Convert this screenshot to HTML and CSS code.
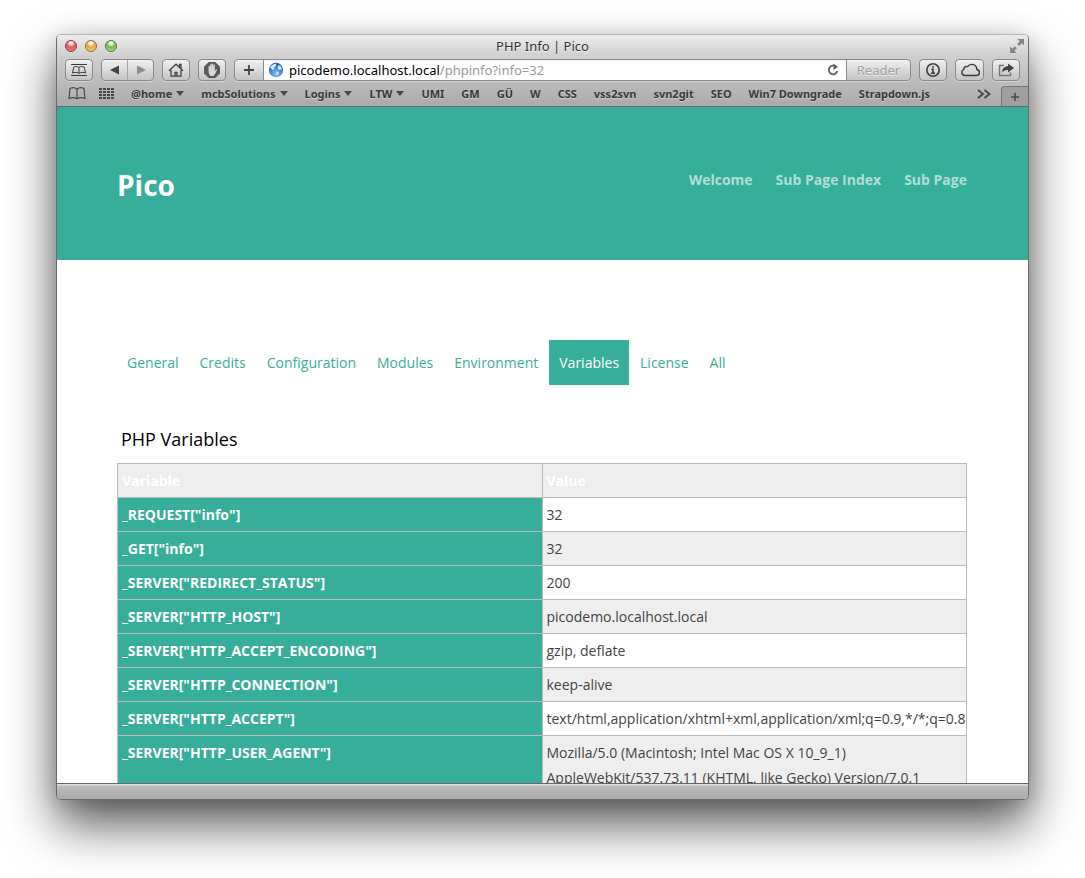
FILE: index.html
```html
<!DOCTYPE html>
<html lang="en">
<head>
<meta charset="utf-8">
<title>PHP Info | Pico</title>
<link rel="stylesheet" href="styles.css">
</head>
<body>
<div class="window">
  <header class="chrome">
    <div class="titlebar">
      <div class="lights">
        <button class="light red" aria-label="Close"></button>
        <button class="light amber" aria-label="Minimize"></button>
        <button class="light green" aria-label="Zoom"></button>
      </div>
      <div class="title">PHP Info | Pico</div>
      <button class="fullscreen" aria-label="Full screen">
        <svg width="16" height="16" viewBox="0 0 16 16"><path d="M8.500 1H15v6.500l-2.200-2.200-2.600 2.600-2-2 2.600-2.600zM1 8.500v6.500h6.500l-2.200-2.200 2.600-2.600-2-2-2.600 2.600z" fill="#858585"/></svg>
      </button>
    </div>
    <div class="toolbar">
      <button class="tool" aria-label="Top sites">
        <svg width="18" height="14" viewBox="0 0 18 14" fill="none" stroke="#3c3c3c"><path d="M1 1.500h16M1 12.500h16"/><path d="M9 4.500C7.500 3.200 5 3.200 3.700 4.200L2.500 10c1.800-.8 4.800-.8 6.500.3 1.700-1.100 4.700-1.100 6.500-.3l-1.200-5.800C13 3.200 10.500 3.200 9 4.500zv6"/></svg>
      </button>
      <div class="pair">
        <button class="half" aria-label="Back"><svg width="10" height="10" viewBox="0 0 10 10"><path d="M9 .5v9L0 5z" fill="#444"/></svg></button>
        <button class="half" aria-label="Forward"><svg width="10" height="10" viewBox="0 0 10 10"><path d="M1 .5v9L10 5z" fill="#8b8b8b"/></svg></button>
      </div>
      <button class="tool" aria-label="Home">
        <svg width="16" height="14" viewBox="0 0 16 14" fill="none" stroke="#444" stroke-width="1.300"><path d="M1 7.800L8 1.200l7 6.600M11.500 4V1.500h1.500v4M3 7v6.200h10V7"/><path d="M7 13V9.500h2V13"/></svg>
      </button>
      <button class="tool" aria-label="Ad blocker">
        <svg width="18" height="18" viewBox="0 0 18 18"><path d="M5.700 1h6.600L17 5.700v6.600L12.300 17H5.700L1 12.300V5.700z" fill="#5b5b5b"/><path d="M5.500 9.500V5.300q.8-.8 1.400 0V8l.2-4.500q.8-.8 1.400 0V8l.3-5q.8-.8 1.400 0v5l.3-4q.8-.8 1.400 0v6l1-1.500q1-.6 1.200.3L12 13.200 10.500 15h-3L6 13z" fill="#d8d8d8"/></svg>
      </button>
      <div class="address">
        <button class="add" aria-label="Add bookmark"><svg width="12" height="12" viewBox="0 0 12 12"><path d="M6 1v10M1 6h10" stroke="#444" stroke-width="1.800"/></svg></button>
        <div class="field">
          <svg width="16" height="16" viewBox="0 0 16 16"><defs><radialGradient id="globe" cx=".5" cy=".75" r=".7"><stop offset="0" stop-color="#7cc4f6"/><stop offset="1" stop-color="#1c58b6"/></radialGradient></defs><circle cx="8" cy="8" r="7.200" fill="url(#globe)"/><path d="M2 5Q4 2 8 1.500L8 4 6 5.500 6.500 7 4.500 8zM10.500 3l2.500 1.500.8 3-2.300.5L9.500 6zM8.500 9.500l2.500 1-1.500 3L8 12.500z" fill="#cfe7fb"/></svg>
          <a class="url" href="#"><span class="host">picodemo.localhost.local</span><span>/phpinfo?info=32</span></a>
          <svg class="reload" width="12" height="14" viewBox="0 0 12 14"><path d="M9 3.800A4.300 4.300 0 1 0 10.300 8" fill="none" stroke="#5d5d5d" stroke-width="1.800"/><path d="M6.500.5L10.800 4 6.500 7z" fill="#5d5d5d"/></svg>
        </div>
        <button class="reader">Reader</button>
      </div>
      <button class="tool" aria-label="Information">
        <svg width="16" height="16" viewBox="0 0 16 16" fill="none" stroke="#3d3d3d" stroke-width="1.600"><circle cx="8" cy="8" r="6.200"/><path d="M8 4v1.700M6.300 7.300H8v4M6 11.300h4"/></svg>
      </button>
      <button class="tool wide" aria-label="iCloud tabs">
        <svg width="20" height="14" viewBox="0 0 20 14" fill="none" stroke="#3d3d3d" stroke-width="1.400"><path d="M5 12.500h11a3 3 0 0 0 .8-6 5 5 0 0 0-9.200-2.800A2.500 2.500 0 0 0 4 6.300a3.200 3.200 0 0 0 1 6.200z"/></svg>
      </button>
      <button class="tool" aria-label="Share">
        <svg width="18" height="14" viewBox="0 0 18 14"><path d="M7 2.500H2.500v10h11V9.500" fill="none" stroke="#777" stroke-width="1.500"/><path d="M11 .5L17 5l-6 4.500V7Q7 6.500 5 10q0-6.500 6-7z" fill="#444"/></svg>
      </button>
    </div>
    <nav class="bookmarks" aria-label="Bookmarks">
      <button class="plain" aria-label="Show bookmarks"><svg width="18" height="13" viewBox="0 0 18 13" fill="none" stroke="#4a4a4a" stroke-width="1.200"><path d="M9 2.200C7 .5 4 .5 2 1.500L1 11.500c2.500-1 6-1 8 .3 2-1.300 5.500-1.300 8-.3l-1-10C14 .5 11 .5 9 2.200zv9.500"/></svg></button>
      <button class="plain grid" aria-label="Top sites grid"><svg width="15" height="11" viewBox="0 0 15 11"><path d="M0 1h15M0 4h15M0 7h15M0 10h15" stroke="#474747" stroke-width="2" stroke-dasharray="3 1"/></svg></button>
      <div class="links">
        <a class="menu" href="#">@home</a>
        <a class="menu" href="#">mcbSolutions</a>
        <a class="menu" href="#">Logins</a>
        <a class="menu" href="#">LTW</a>
        <a href="#">UMI</a>
        <a href="#">GM</a>
        <a href="#">GÜ</a>
        <a href="#">W</a>
        <a href="#">CSS</a>
        <a href="#">vss2svn</a>
        <a href="#">svn2git</a>
        <a href="#">SEO</a>
        <a href="#">Win7 Downgrade</a>
        <a href="#">Strapdown.js</a>
      </div>
      <button class="plain more" aria-label="More bookmarks"><svg width="14" height="10" viewBox="0 0 14 10" fill="none" stroke="#4a4a4a" stroke-width="2"><path d="M1 1l5 4-5 4M7.500 1l5 4-5 4"/></svg></button>
      <button class="newtab" aria-label="New tab"><svg width="10" height="10" viewBox="0 0 10 10"><path d="M5 1v8M1 5h8" stroke="#4a4a4a" stroke-width="1.600"/></svg></button>
    </nav>
  </header>
  <main class="page">
    <div class="banner">
      <div class="inner">
        <h1>Pico</h1>
        <nav class="sitenav">
          <a href="#">Welcome</a>
          <a href="#">Sub Page Index</a>
          <a href="#">Sub Page</a>
        </nav>
      </div>
    </div>
    <div class="content">
      <nav class="tabs">
        <a href="#">General</a>
        <a href="#">Credits</a>
        <a href="#">Configuration</a>
        <a href="#">Modules</a>
        <a href="#">Environment</a>
        <a class="active" href="#">Variables</a>
        <a href="#">License</a>
        <a href="#">All</a>
      </nav>
      <h2>PHP Variables</h2>
      <table>
        <thead><tr><th>Variable</th><th>Value</th></tr></thead>
        <tbody>
          <tr><th>_REQUEST["info"]</th><td>32</td></tr>
          <tr><th>_GET["info"]</th><td>32</td></tr>
          <tr><th>_SERVER["REDIRECT_STATUS"]</th><td>200</td></tr>
          <tr><th>_SERVER["HTTP_HOST"]</th><td>picodemo.localhost.local</td></tr>
          <tr><th>_SERVER["HTTP_ACCEPT_ENCODING"]</th><td>gzip, deflate</td></tr>
          <tr><th>_SERVER["HTTP_CONNECTION"]</th><td>keep-alive</td></tr>
          <tr><th>_SERVER["HTTP_ACCEPT"]</th><td>text/html,application/xhtml+xml,application/xml;q=0.9,*/*;q=0.8</td></tr>
          <tr><th>_SERVER["HTTP_USER_AGENT"]</th><td>Mozilla/5.0 (Macintosh; Intel Mac OS X 10_9_1) AppleWebKit/537.73.11 (KHTML, like Gecko) Version/7.0.1</td></tr>
        </tbody>
      </table>
    </div>
  </main>
  <footer class="status"></footer>
</div>
</body>
</html>
```

FILE: styles.css
```css
* { box-sizing: border-box; }
body {
  margin: 0;
  height: 100vh;
  padding: 34px 56px 78px;
  background: #fff;
  font-family: "Open Sans", sans-serif;
  font-size: 14px;
  overflow: hidden;
}
a { text-decoration: none; color: inherit; }
button { padding: 0; border: 0; background: none; font: inherit; }
svg { display: block; flex: none; }

.window {
  height: 100%;
  display: flex;
  flex-direction: column;
  border: 1px solid #6c6c6c;
  border-top-color: #b4b4b4;
  border-radius: 5px;
  overflow: hidden;
  background: #fff;
  box-shadow: 0 25px 50px rgba(0, 0, 0, .65), 0 4px 20px rgba(0, 0, 0, .15);
}

.chrome {
  flex: none;
  background: linear-gradient(#ececec, #cfcfcf 30%, #aaa);
  border-bottom: 1px solid #666;
  font-family: "Noto Sans", sans-serif;
}
.titlebar {
  display: grid;
  grid-template-columns: 1fr auto 1fr;
  align-items: center;
  height: 23px;
  padding: 0 3px 1px 8px;
}
.lights { display: flex; gap: 8px; }
.light {
  width: 12px;
  height: 12px;
  border-radius: 50%;
  border: 1px solid #666;
}
.red { background: radial-gradient(circle at 50% 20%, #fff 0 10%, #e8525a 45%, #f48b8b); border-color: #93383c; }
.amber { background: radial-gradient(circle at 50% 20%, #fff 0 10%, #eda53b 45%, #fbdc86); border-color: #96672a; }
.green { background: radial-gradient(circle at 50% 20%, #fff 0 10%, #76b84d 45%, #bce998); border-color: #4b7b35; }
.title { padding-right: 5px; font-size: 13px; line-height: 20px; color: #333; text-shadow: 0 1px #f5f5f5; }
.fullscreen { justify-self: end; }

.toolbar { display: flex; gap: 8px; padding: 1px 8px 3px; }
.tool, .pair, .address {
  height: 22px;
  border: 1px solid #8a8a8a;
  border-radius: 4px;
  background: linear-gradient(#f1f1f1, #c3c3c3);
  box-shadow: 0 1px rgba(255, 255, 255, .35);
}
.tool { display: flex; flex: none; align-items: center; justify-content: center; width: 28px; }
.wide { width: 29px; }
.pair { display: flex; flex: none; width: 53px; }
.half { flex: 1; display: flex; align-items: center; justify-content: center; }
.half + .half { border-left: 1px solid #a5a5a5; }
.address { display: flex; flex: 1; overflow: hidden; }
.add { display: flex; flex: none; align-items: center; justify-content: center; width: 29px; border-right: 1px solid #8a8a8a; }
.field {
  flex: 1;
  display: flex;
  align-items: center;
  gap: 5px;
  padding: 0 7px 0 4px;
  background: linear-gradient(#f5f5f5, #fff 5px);
}
.url { flex: 1; font-size: 13px; line-height: 20px; color: #9a9a9a; }
.host { color: #000; }
.reader {
  width: 64px;
  border-left: 1px solid #8a8a8a;
  font-size: 13px;
  line-height: 20px;
  color: #a2a2a2;
  text-shadow: 0 1px #eee;
}

.bookmarks { display: flex; align-items: center; height: 22px; padding-left: 11px; }
.plain { flex: none; padding-bottom: 3px; }
.grid { margin-left: 13px; }
.links {
  flex: 1;
  display: flex;
  gap: 17px;
  margin-left: 17px;
  padding-bottom: 3px;
  font-size: 11px;
  font-weight: 700;
  line-height: 18px;
  color: #3a3a3a;
  white-space: nowrap;
  text-shadow: 0 1px #ccc;
}
.menu { display: flex; align-items: center; gap: 4px; }
.menu::after {
  content: "";
  border: 4px solid transparent;
  border-top: 5px solid #484848;
  border-bottom: 0;
}
.more { margin-right: 10px; }
.newtab {
  align-self: flex-end;
  flex: none;
  display: flex;
  align-items: center;
  justify-content: center;
  width: 27px;
  height: 20px;
  border: 1px solid #777;
  border-width: 1px 0 0 1px;
  border-top-left-radius: 4px;
  background: #9f9f9f;
}

.page { flex: 1; min-height: 0; overflow: hidden; color: #444; }
.banner { background: #37ad9b; padding: 60px 0 55px; }
.inner, .content { margin: 0 61px 0 60px; }
.inner { display: flex; justify-content: space-between; align-items: flex-start; }
h1 { margin: 0; font-size: 28px; line-height: 36px; color: #fff; }
.banner h1 { padding-bottom: 2px; }
.sitenav { display: flex; gap: 23px; font-weight: 700; line-height: 26px; color: #afded7; }
.content { padding-top: 80px; }
.tabs { display: flex; gap: 1px; color: #37ad9b; line-height: 25px; }
.tabs a { padding: 10px; }
.tabs .active { background: #37ad9b; color: #fff; }
h2 {
  margin: 41px 0 11px;
  padding-left: 4px;
  font-size: 18px;
  font-weight: 400;
  line-height: 26px;
  color: #000;
}
table { width: 100%; table-layout: fixed; border-collapse: collapse; line-height: 25px; }
th, td { padding: 4px; border: 1px solid #bbb; text-align: left; vertical-align: top; }
td { padding-right: 0; }
th { color: #fff; }
tbody th { background: #37ad9b; }
thead th, tbody tr:nth-child(even) td { background: #eee; }

.status {
  flex: none;
  height: 16px;
  border-top: 1px solid #666;
  background: linear-gradient(#dedede 1px, #bdbdbd 2px, #a9a9a9);
}
```
